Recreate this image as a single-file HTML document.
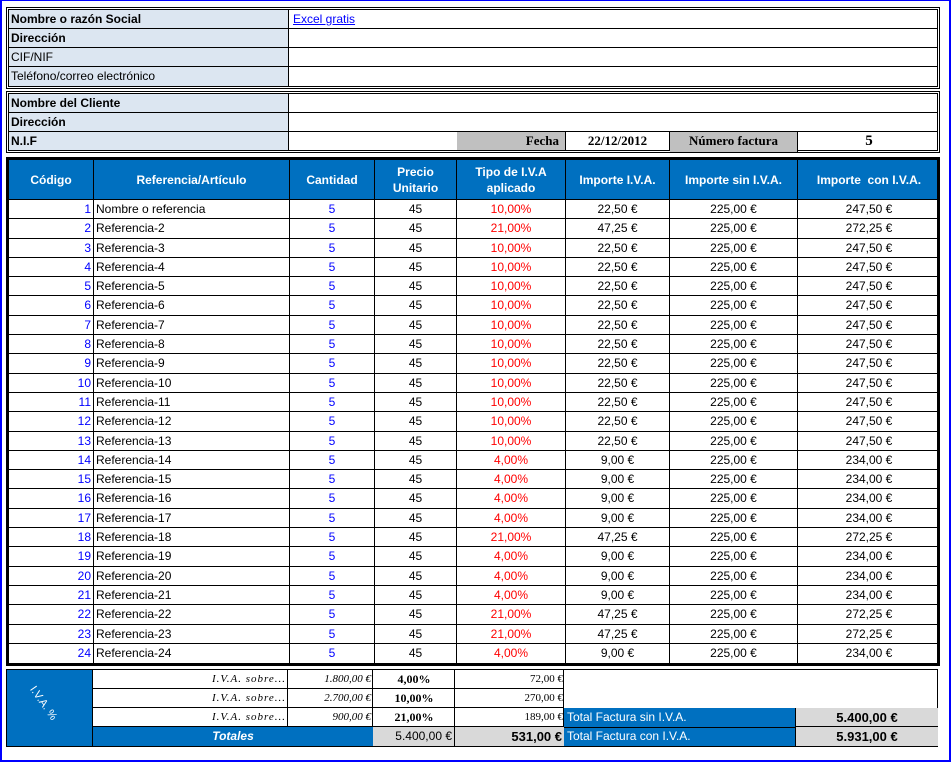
<!DOCTYPE html>
<html><head><meta charset="utf-8"><style>
*{box-sizing:border-box;margin:0;padding:0}
body{width:952px;height:763px;background:#fff;font-family:"Liberation Sans",Arial,sans-serif;font-size:12px;color:#000;position:relative;overflow:hidden}
.frame{position:absolute;left:0;top:0;width:951px;height:762px;border:2px solid #0000ff;border-top-width:1px}
.a{position:absolute}
.box{position:absolute;border:3px double #000}
.lab{position:absolute;left:0;width:280px;background:#dce6f1;border-right:1px solid #000;padding-left:2px;font-weight:bold;line-height:18px}
.rowl{position:absolute;left:0;right:0;border-bottom:1px solid #000}
.c{position:absolute;top:0;height:100%;border-right:1px solid #000;line-height:19px;white-space:nowrap;overflow:hidden}
.tbl{position:absolute;left:6px;top:157px;width:934px;border:3px solid #000;border-top-width:3px}
.hd{position:relative;height:40px;background:#0070c0;color:#fff;font-weight:bold;border-bottom:1px solid #000}
.hd .c{display:flex;align-items:center;justify-content:center;text-align:center;line-height:16px}
.r{position:relative;height:19.3px;border-bottom:1px solid #000}
.r .c{line-height:18px}
.k1{left:0;width:85px;text-align:right;color:#0000ff;padding-right:2px}
.k2{left:85px;width:196px;padding-left:2px}
.k3{left:281px;width:85px;text-align:center;color:#0000ff}
.k4{left:366px;width:82px;text-align:center}
.k5{left:448px;width:109px;text-align:center;color:#ff0000}
.k6{left:557px;width:104px;text-align:center}
.k7{left:661px;width:128px;text-align:center}
.k8{left:789px;width:142px;text-align:center;border-right:none}
.serif{font-family:"Liberation Serif",serif}
</style></head><body>
<div class="frame"></div>

<div class="box" style="left:6px;top:7px;width:934px;height:82px">
 <div class="rowl" style="top:0;height:19px"><div class="lab" style="height:18px">Nombre o razón Social</div><div class="a" style="left:284px;top:2px;color:#0000ff;text-decoration:underline;line-height:14px">Excel gratis</div></div>
 <div class="rowl" style="top:19px;height:19px"><div class="lab" style="height:18px">Dirección</div></div>
 <div class="rowl" style="top:38px;height:19px"><div class="lab" style="height:18px;font-weight:normal">CIF/NIF</div></div>
 <div class="rowl" style="top:57px;height:19px;border-bottom:none"><div class="lab" style="height:19px;font-weight:normal">Teléfono/correo electrónico</div></div>
</div>

<div class="box" style="left:6px;top:91px;width:934px;height:62px">
 <div class="rowl" style="top:0;height:19px"><div class="lab" style="height:18px">Nombre del Cliente</div></div>
 <div class="rowl" style="top:19px;height:19px"><div class="lab" style="height:18px">Dirección</div></div>
 <div class="rowl" style="top:38px;height:18px;border-bottom:none"><div class="lab" style="height:18px">N.I.F</div>
  <div class="a serif" style="left:448px;top:0;width:109px;height:18px;background:#c0c0c0;border-right:1px solid #000;text-align:right;padding-right:6px;font-weight:bold;font-size:13px;line-height:18px">Fecha</div>
  <div class="a serif" style="left:557px;top:0;width:104px;height:18px;text-align:center;font-weight:bold;font-size:13px;line-height:18px;border-right:1px solid #000">22/12/2012</div>
  <div class="a serif" style="left:661px;top:0;width:128px;height:20px;background:#c0c0c0;border-right:1px solid #000;text-align:center;font-weight:bold;font-size:13px;line-height:18px">Número factura</div>
  <div class="a serif" style="left:789px;top:0;width:142px;height:18px;text-align:center;font-weight:bold;font-size:15px;line-height:18px">5</div>
 </div>
</div>

<div class="tbl">
 <div class="hd">
  <div class="c k1" style="color:#fff;text-align:center;justify-content:center;padding:0">Código</div>
  <div class="c k2" style="padding:0">Referencia/Artículo</div>
  <div class="c k3" style="color:#fff">Cantidad</div>
  <div class="c k4">Precio<br>Unitario</div>
  <div class="c k5" style="color:#fff">Tipo de I.V.A<br>aplicado</div>
  <div class="c k6">Importe I.V.A.</div>
  <div class="c k7">Importe sin I.V.A.</div>
  <div class="c k8">Importe &nbsp;con I.V.A.</div>
 </div>
 <div class="r"><div class="c k1">1</div><div class="c k2">Nombre o referencia</div><div class="c k3">5</div><div class="c k4">45</div><div class="c k5">10,00%</div><div class="c k6">22,50 €</div><div class="c k7">225,00 €</div><div class="c k8">247,50 €</div></div>
 <div class="r"><div class="c k1">2</div><div class="c k2">Referencia-2</div><div class="c k3">5</div><div class="c k4">45</div><div class="c k5">21,00%</div><div class="c k6">47,25 €</div><div class="c k7">225,00 €</div><div class="c k8">272,25 €</div></div>
 <div class="r"><div class="c k1">3</div><div class="c k2">Referencia-3</div><div class="c k3">5</div><div class="c k4">45</div><div class="c k5">10,00%</div><div class="c k6">22,50 €</div><div class="c k7">225,00 €</div><div class="c k8">247,50 €</div></div>
 <div class="r"><div class="c k1">4</div><div class="c k2">Referencia-4</div><div class="c k3">5</div><div class="c k4">45</div><div class="c k5">10,00%</div><div class="c k6">22,50 €</div><div class="c k7">225,00 €</div><div class="c k8">247,50 €</div></div>
 <div class="r"><div class="c k1">5</div><div class="c k2">Referencia-5</div><div class="c k3">5</div><div class="c k4">45</div><div class="c k5">10,00%</div><div class="c k6">22,50 €</div><div class="c k7">225,00 €</div><div class="c k8">247,50 €</div></div>
 <div class="r"><div class="c k1">6</div><div class="c k2">Referencia-6</div><div class="c k3">5</div><div class="c k4">45</div><div class="c k5">10,00%</div><div class="c k6">22,50 €</div><div class="c k7">225,00 €</div><div class="c k8">247,50 €</div></div>
 <div class="r"><div class="c k1">7</div><div class="c k2">Referencia-7</div><div class="c k3">5</div><div class="c k4">45</div><div class="c k5">10,00%</div><div class="c k6">22,50 €</div><div class="c k7">225,00 €</div><div class="c k8">247,50 €</div></div>
 <div class="r"><div class="c k1">8</div><div class="c k2">Referencia-8</div><div class="c k3">5</div><div class="c k4">45</div><div class="c k5">10,00%</div><div class="c k6">22,50 €</div><div class="c k7">225,00 €</div><div class="c k8">247,50 €</div></div>
 <div class="r"><div class="c k1">9</div><div class="c k2">Referencia-9</div><div class="c k3">5</div><div class="c k4">45</div><div class="c k5">10,00%</div><div class="c k6">22,50 €</div><div class="c k7">225,00 €</div><div class="c k8">247,50 €</div></div>
 <div class="r"><div class="c k1">10</div><div class="c k2">Referencia-10</div><div class="c k3">5</div><div class="c k4">45</div><div class="c k5">10,00%</div><div class="c k6">22,50 €</div><div class="c k7">225,00 €</div><div class="c k8">247,50 €</div></div>
 <div class="r"><div class="c k1">11</div><div class="c k2">Referencia-11</div><div class="c k3">5</div><div class="c k4">45</div><div class="c k5">10,00%</div><div class="c k6">22,50 €</div><div class="c k7">225,00 €</div><div class="c k8">247,50 €</div></div>
 <div class="r"><div class="c k1">12</div><div class="c k2">Referencia-12</div><div class="c k3">5</div><div class="c k4">45</div><div class="c k5">10,00%</div><div class="c k6">22,50 €</div><div class="c k7">225,00 €</div><div class="c k8">247,50 €</div></div>
 <div class="r"><div class="c k1">13</div><div class="c k2">Referencia-13</div><div class="c k3">5</div><div class="c k4">45</div><div class="c k5">10,00%</div><div class="c k6">22,50 €</div><div class="c k7">225,00 €</div><div class="c k8">247,50 €</div></div>
 <div class="r"><div class="c k1">14</div><div class="c k2">Referencia-14</div><div class="c k3">5</div><div class="c k4">45</div><div class="c k5">4,00%</div><div class="c k6">9,00 €</div><div class="c k7">225,00 €</div><div class="c k8">234,00 €</div></div>
 <div class="r"><div class="c k1">15</div><div class="c k2">Referencia-15</div><div class="c k3">5</div><div class="c k4">45</div><div class="c k5">4,00%</div><div class="c k6">9,00 €</div><div class="c k7">225,00 €</div><div class="c k8">234,00 €</div></div>
 <div class="r"><div class="c k1">16</div><div class="c k2">Referencia-16</div><div class="c k3">5</div><div class="c k4">45</div><div class="c k5">4,00%</div><div class="c k6">9,00 €</div><div class="c k7">225,00 €</div><div class="c k8">234,00 €</div></div>
 <div class="r"><div class="c k1">17</div><div class="c k2">Referencia-17</div><div class="c k3">5</div><div class="c k4">45</div><div class="c k5">4,00%</div><div class="c k6">9,00 €</div><div class="c k7">225,00 €</div><div class="c k8">234,00 €</div></div>
 <div class="r"><div class="c k1">18</div><div class="c k2">Referencia-18</div><div class="c k3">5</div><div class="c k4">45</div><div class="c k5">21,00%</div><div class="c k6">47,25 €</div><div class="c k7">225,00 €</div><div class="c k8">272,25 €</div></div>
 <div class="r"><div class="c k1">19</div><div class="c k2">Referencia-19</div><div class="c k3">5</div><div class="c k4">45</div><div class="c k5">4,00%</div><div class="c k6">9,00 €</div><div class="c k7">225,00 €</div><div class="c k8">234,00 €</div></div>
 <div class="r"><div class="c k1">20</div><div class="c k2">Referencia-20</div><div class="c k3">5</div><div class="c k4">45</div><div class="c k5">4,00%</div><div class="c k6">9,00 €</div><div class="c k7">225,00 €</div><div class="c k8">234,00 €</div></div>
 <div class="r"><div class="c k1">21</div><div class="c k2">Referencia-21</div><div class="c k3">5</div><div class="c k4">45</div><div class="c k5">4,00%</div><div class="c k6">9,00 €</div><div class="c k7">225,00 €</div><div class="c k8">234,00 €</div></div>
 <div class="r"><div class="c k1">22</div><div class="c k2">Referencia-22</div><div class="c k3">5</div><div class="c k4">45</div><div class="c k5">21,00%</div><div class="c k6">47,25 €</div><div class="c k7">225,00 €</div><div class="c k8">272,25 €</div></div>
 <div class="r"><div class="c k1">23</div><div class="c k2">Referencia-23</div><div class="c k3">5</div><div class="c k4">45</div><div class="c k5">21,00%</div><div class="c k6">47,25 €</div><div class="c k7">225,00 €</div><div class="c k8">272,25 €</div></div>
 <div class="r" style="border-bottom:none"><div class="c k1">24</div><div class="c k2">Referencia-24</div><div class="c k3">5</div><div class="c k4">45</div><div class="c k5">4,00%</div><div class="c k6">9,00 €</div><div class="c k7">225,00 €</div><div class="c k8">234,00 €</div></div>
</div>

<!-- summary -->
<div class="a" style="left:6px;top:669px;width:932px;height:1px;background:#000"></div>
<div class="a" style="left:6px;top:670px;width:932px;height:77px;border:1px solid #000;border-top:none">
 <div class="a" style="left:0;top:0;width:85px;height:76px;background:#0070c0"></div>
 <div class="a" style="left:14px;top:28px;color:#fff;font-size:11px;transform:rotate(55deg);transform-origin:left top;white-space:nowrap;left:30px;top:14px">I.V.A. %</div>
 <!-- rows -->
 <div class="a" style="left:85px;top:0;width:472px;height:19px;border-bottom:1px solid #000"></div>
 <div class="a" style="left:85px;top:19px;width:472px;height:19px;border-bottom:1px solid #000"></div>
 <div class="a" style="left:85px;top:38px;width:846px;height:19px;border-bottom:1px solid #000"></div>
 <div class="a" style="left:85px;top:0;width:196px;height:57px;border-left:1px solid #000;border-right:1px solid #000"></div>
 <div class="a" style="left:281px;top:0;width:85px;height:57px;border-right:1px solid #000"></div>
 <div class="a" style="left:366px;top:0;width:82px;height:57px;border-right:1px solid #000"></div>
 <div class="a" style="left:448px;top:0;width:109px;height:57px;border-right:1px solid #000"></div>
 <div class="a serif" style="left:85px;top:0;width:194px;text-align:right;font-style:italic;font-size:11px;line-height:19px;letter-spacing:1px">I.V.A. sobre...</div>
 <div class="a serif" style="left:85px;top:19px;width:194px;text-align:right;font-style:italic;font-size:11px;line-height:19px;letter-spacing:1px">I.V.A. sobre...</div>
 <div class="a serif" style="left:85px;top:38px;width:194px;text-align:right;font-style:italic;font-size:11px;line-height:19px;letter-spacing:1px">I.V.A. sobre...</div>
 <div class="a serif" style="left:281px;top:0;width:83px;text-align:right;font-style:italic;font-size:11px;line-height:19px">1.800,00 €</div>
 <div class="a serif" style="left:281px;top:19px;width:83px;text-align:right;font-style:italic;font-size:11px;line-height:19px">2.700,00 €</div>
 <div class="a serif" style="left:281px;top:38px;width:83px;text-align:right;font-style:italic;font-size:11px;line-height:19px">900,00 €</div>
 <div class="a serif" style="left:366px;top:0;width:82px;text-align:center;font-weight:bold;font-size:12px;line-height:19px">4,00%</div>
 <div class="a serif" style="left:366px;top:19px;width:82px;text-align:center;font-weight:bold;font-size:12px;line-height:19px">10,00%</div>
 <div class="a serif" style="left:366px;top:38px;width:82px;text-align:center;font-weight:bold;font-size:12px;line-height:19px">21,00%</div>
 <div class="a serif" style="left:448px;top:0;width:108px;text-align:right;font-size:11px;line-height:19px">72,00 €</div>
 <div class="a serif" style="left:448px;top:19px;width:108px;text-align:right;font-size:11px;line-height:19px">270,00 €</div>
 <div class="a serif" style="left:448px;top:38px;width:108px;text-align:right;font-size:11px;line-height:19px">189,00 €</div>
 <div class="a" style="left:557px;top:38px;width:232px;height:38px;background:#0070c0;border-right:1px solid #000"></div>
 <div class="a" style="left:560px;top:38px;color:#fff;line-height:19px">Total Factura sin I.V.A.</div>
 <div class="a" style="left:557px;top:57px;width:232px;height:1px;background:#000"></div>
 <div class="a" style="left:560px;top:57px;color:#fff;line-height:19px">Total Factura con I.V.A.</div>
 <div class="a" style="left:789px;top:38px;width:142px;height:19px;background:#d9d9d9;border-bottom:1px solid #000;text-align:center;font-weight:bold;font-size:13px;line-height:19px">5.400,00 €</div>
 <div class="a" style="left:789px;top:57px;width:142px;height:19px;background:#d9d9d9;text-align:center;font-weight:bold;font-size:13px;line-height:19px">5.931,00 €</div>
 <div class="a" style="left:85px;top:57px;width:281px;height:19px;background:#0070c0;border-left:1px solid #000;color:#fff;font-weight:bold;font-style:italic;text-align:center;line-height:19px">Totales</div>
 <div class="a" style="left:366px;top:57px;width:82px;height:19px;background:#d9d9d9;border-right:1px solid #000;text-align:right;padding-right:2px;line-height:19px">5.400,00 €</div>
 <div class="a" style="left:448px;top:57px;width:109px;height:19px;background:#d9d9d9;text-align:right;padding-right:2px;font-weight:bold;font-size:13px;line-height:19px">531,00 €</div>
</div>
</body></html>
